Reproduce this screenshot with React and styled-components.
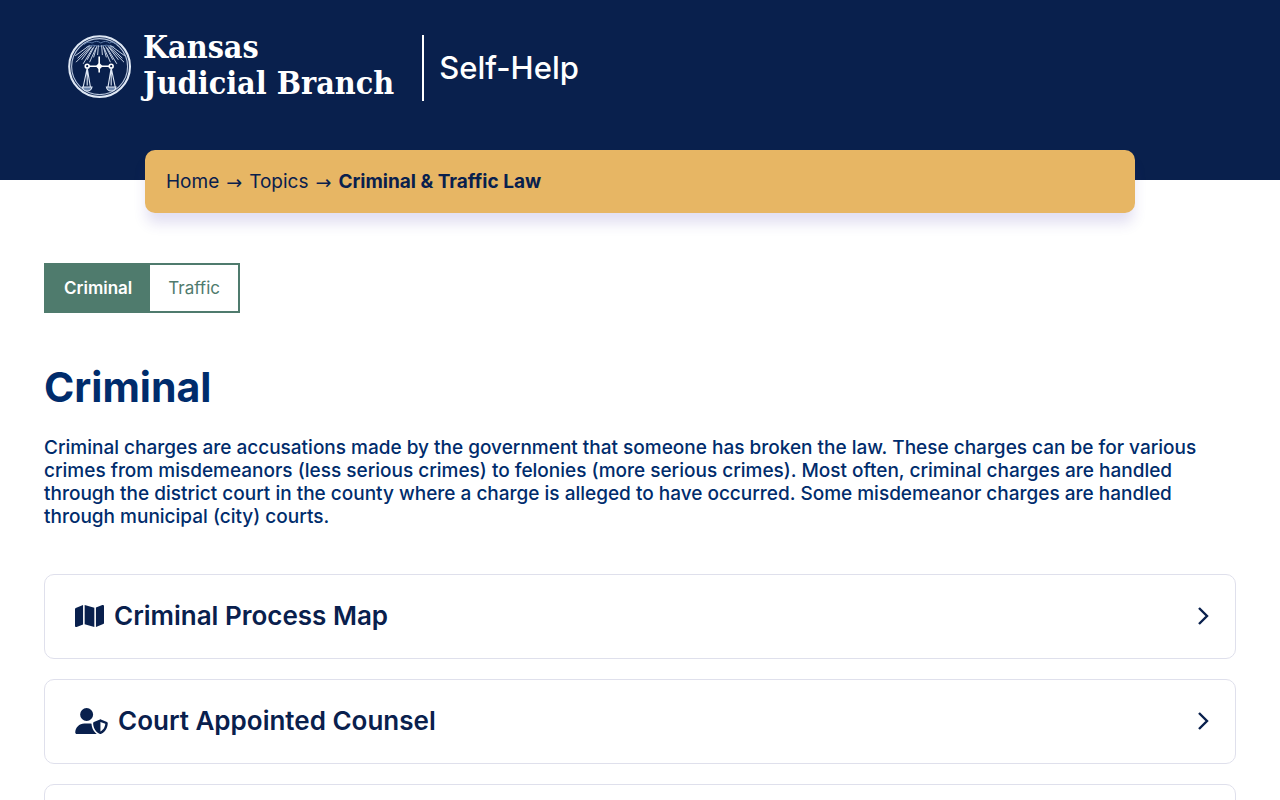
import React from "react";
import styled, { createGlobalStyle } from "styled-components";
import { FaMap, FaUserShield, FaFileLines } from "react-icons/fa6";

const crumbs = ["Home", "Topics"];

const tabs = [
  { label: "Criminal", active: true },
  { label: "Traffic", active: false },
];

const topics = [
  { title: "Criminal Process Map", icon: FaMap, iconWidth: 29 },
  { title: "Court Appointed Counsel", icon: FaUserShield, iconWidth: 33 },
  { title: "Expungement", icon: FaFileLines, iconWidth: 20 },
];

const rays = [
  "M27 13 L9 26",
  "M28 14 L12 29",
  "M29 15 L10 34",
  "M30 14 L17 31",
  "M31 16 L19 36",
  "M33 14 L24 31",
  "M35 16 L27 34",
  "M36 14 L32 28",
  "M38 13 L37 25",
  "M42 13 L43 25",
  "M44 14 L48 28",
  "M45 16 L53 34",
  "M47 14 L56 31",
  "M49 16 L61 36",
  "M50 14 L63 31",
  "M51 15 L70 34",
  "M52 14 L68 29",
  "M53 13 L71 26",
];

const Seal = () => (
  <svg width="64" height="64" viewBox="0 0 80 80" fill="none" aria-hidden="true">
    <circle cx="39.5" cy="39.5" r="38" stroke="#dfe8f5" strokeWidth="2.6" />
    <circle cx="39.5" cy="39.5" r="35" stroke="#b7c5dc" strokeWidth="1.4" />
    <path
      d="M20 12 Q25 7 30 10 Q36 6 41 10 Q47 6 52 10 Q57 7 61 12 M23 15 Q31 11 39 14 Q48 11 58 15"
      stroke="#5f7dab"
      strokeWidth="1.2"
    />
    {rays.map((d) => (
      <path key={d} d={d} stroke="#cbd6e8" strokeWidth="1.2" />
    ))}
    <g stroke="#fff" strokeWidth="2">
      <path d="M26 39 H36 M42 39 H52 M39 27 V47" />
      <path d="M39 36 L42 39 L39 42 L36 39 Z" fill="#fff" />
      <circle cx="24" cy="39" r="2.4" />
      <circle cx="54" cy="39" r="2.4" />
    </g>
    <g stroke="#dfe8f5" strokeWidth="1.4">
      <path d="M24 41 L19 65 M24 41 L28 65 M24 41 V63" />
      <path d="M54 41 L50 65 M54 41 L59 65 M54 41 V63" />
      <path d="M18 65 H30 Q29 70 24 70 Q19 70 18 65 Z" fill="#6d87ae" />
      <path d="M48 65 H60 Q59 70 54 70 Q49 70 48 65 Z" fill="#6d87ae" />
    </g>
  </svg>
);

const Chevron = () => (
  <svg width="12" height="18" viewBox="0 0 12 18" fill="none" aria-hidden="true">
    <path d="M2 1 L10 9 L2 17" stroke="currentColor" strokeWidth="2.4" />
  </svg>
);

const App = () => {
  return (
    <>
      <GlobalStyle />
      <Header>
        <Brand href="#">
          <Seal />
          <BrandName>
            Kansas
            <br />
            Judicial Branch
          </BrandName>
        </Brand>
        <SiteName href="#">Self-Help</SiteName>
      </Header>
      <Breadcrumb aria-label="Breadcrumb">
        {crumbs.map((crumb) => (
          <React.Fragment key={crumb}>
            <a href="#">{crumb}</a>
            <Arrow>→</Arrow>
          </React.Fragment>
        ))}
        <strong>Criminal &amp; Traffic Law</strong>
      </Breadcrumb>
      <Main>
        <Tabs>
          {tabs.map((tab) => (
            <Tab key={tab.label} type="button" $active={tab.active}>
              {tab.label}
            </Tab>
          ))}
        </Tabs>
        <Title>Criminal</Title>
        <Intro>
          Criminal charges are accusations made by the government that someone
          has broken the law. These charges can be for various crimes from
          misdemeanors (less serious crimes) to felonies (more serious crimes).
          Most often, criminal charges are handled through the district court in
          the county where a charge is alleged to have occurred. Some
          misdemeanor charges are handled through municipal (city) courts.
        </Intro>
        <Topics>
          {topics.map(({ title, icon, iconWidth }) => (
            <Topic key={title} type="button">
              <TopicIcon as={icon} $width={iconWidth} />
              <TopicTitle>{title}</TopicTitle>
              <Chevron />
            </Topic>
          ))}
        </Topics>
      </Main>
    </>
  );
};

const GlobalStyle = createGlobalStyle`
  *, *::before, *::after {
    box-sizing: border-box;
  }

  body {
    margin: 0;
    background: #fff;
    color: #002c6c;
    font-family: Inter, "Liberation Sans", sans-serif;
    font-size: 19px;
  }

  a {
    color: inherit;
    text-decoration: none;
  }

  button {
    font-family: inherit;
    cursor: pointer;
  }
`;

const Header = styled.header`
  display: flex;
  align-items: flex-start;
  height: 180px;
  padding: 35px 68px 0;
  background: #09204d;
  color: #fff;
`;

const Brand = styled.a`
  display: flex;
  gap: 11px;
  height: 66px;
  padding-right: 28px;
  border-right: 2px solid #fff;
`;

const BrandName = styled.span`
  margin-top: -6px;
  font-family: "DejaVu Serif Condensed", "DejaVu Serif", serif;
  font-size: 32px;
  font-weight: 700;
  line-height: 36px;
  white-space: nowrap;
`;

const SiteName = styled.a`
  padding-left: 15px;
  font-size: 31px;
  font-weight: 500;
  line-height: 66px;
`;

const Breadcrumb = styled.nav`
  display: flex;
  align-items: center;
  gap: 7px;
  width: calc(100% - 290px);
  min-height: 63px;
  margin: -30px auto 0;
  padding: 0 21px;
  border-radius: 10px;
  background: #e7b664;
  box-shadow: 0 12px 14px -2px rgba(70, 50, 170, 0.16);
  color: #09204d;

  strong {
    font-weight: 700;
  }
`;

const Arrow = styled.span`
  font-family: "Noto Sans", "DejaVu Sans", sans-serif;
  font-size: 19px;
`;

const Main = styled.main`
  padding: 50px 44px;
`;

const Tabs = styled.div`
  display: flex;
  width: fit-content;
  border: 2px solid #4f7b6d;
`;

const Tab = styled.button`
  height: 46px;
  padding: 0 18px;
  border: 0;
  background: ${(props) => (props.$active ? "#4f7b6d" : "#fff")};
  color: ${(props) => (props.$active ? "#fff" : "#4f7b6d")};
  font-size: 17px;
  font-weight: ${(props) => (props.$active ? 600 : 400)};
`;

const Title = styled.h1`
  margin: 50px 0 0;
  font-size: 41px;
  font-weight: 700;
  line-height: 48px;
`;

const Intro = styled.p`
  margin: 25px 0 0;
  font-weight: 500;
  line-height: 23px;
`;

const Topics = styled.div`
  display: flex;
  flex-direction: column;
  gap: 20px;
  margin-top: 46px;
`;

const Topic = styled.button`
  display: flex;
  align-items: center;
  gap: 10px;
  width: 100%;
  height: 85px;
  padding: 0 26px 2px 30px;
  border: 1px solid #dfe0ec;
  border-radius: 10px;
  background: #fff;
  color: #09204d;
  text-align: left;
`;

const TopicIcon = styled.svg`
  width: ${(props) => props.$width}px;
  height: 26px;
`;

const TopicTitle = styled.span`
  flex: 1;
  font-size: 26px;
  font-weight: 600;
`;

export default App;
